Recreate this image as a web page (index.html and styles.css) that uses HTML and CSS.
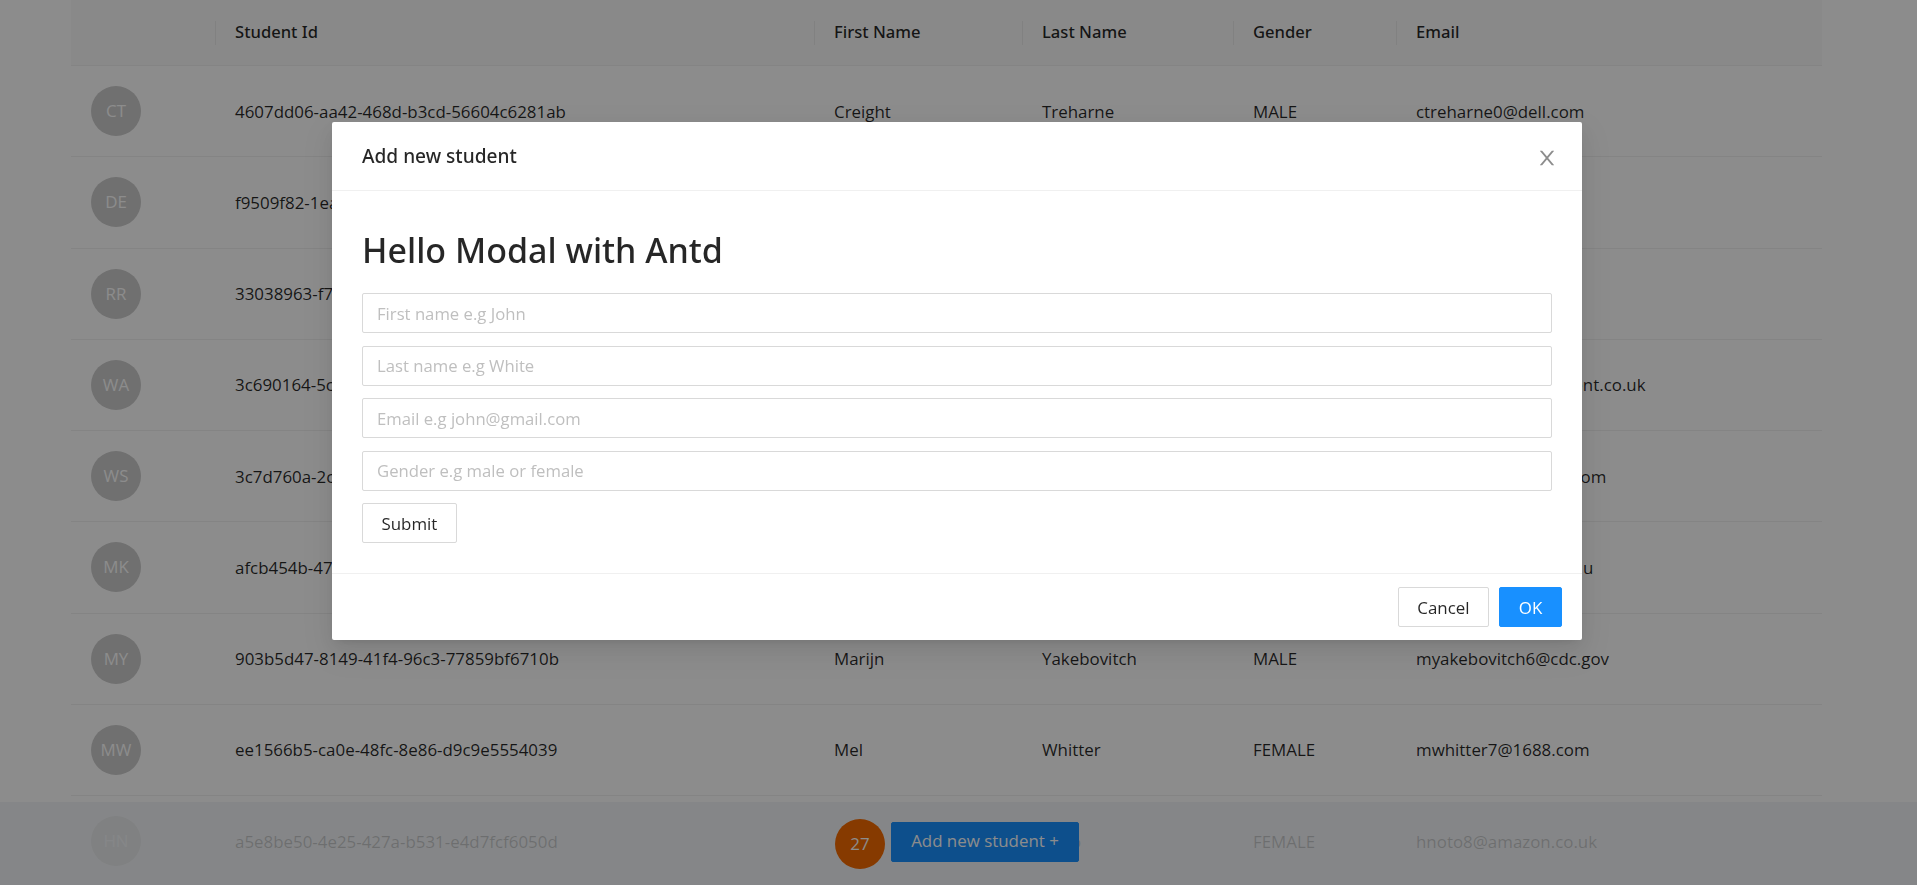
FILE: index.html
```html
<!DOCTYPE html>
<html lang="en">
<head>
    <meta charset="UTF-8">
    <title>Students</title>
    <link rel="stylesheet" href="styles.css">
</head>
<body>
    <!-- Students table -->
    <div class="content">
        <table class="students">
            <colgroup>
                <col class="col-avatar">
                <col class="col-id">
                <col class="col-first">
                <col class="col-last">
                <col class="col-gender">
                <col class="col-email">
            </colgroup>
            <thead>
                <tr>
                    <th></th>
                    <th>Student Id</th>
                    <th>First Name</th>
                    <th>Last Name</th>
                    <th>Gender</th>
                    <th>Email</th>
                </tr>
            </thead>
            <tbody>
                <tr>
                    <td><div class="avatar">CT</div></td>
                    <td>4607dd06-aa42-468d-b3cd-56604c6281ab</td>
                    <td>Creight</td>
                    <td>Treharne</td>
                    <td>MALE</td>
                    <td>ctreharne0@dell.com</td>
                </tr>
                <tr>
                    <td><div class="avatar">DE</div></td>
                    <td>f9509f82-1ea2-4a5c-9d3e-7b1c0e6f42a8</td>
                    <td>Dulcea</td>
                    <td>Eilers</td>
                    <td>FEMALE</td>
                    <td>deilers1@usa.gov</td>
                </tr>
                <tr>
                    <td><div class="avatar">RR</div></td>
                    <td>33038963-f7a1-4b60-8e2d-91c4d7a3e015</td>
                    <td>Rica</td>
                    <td>Rowe</td>
                    <td>FEMALE</td>
                    <td>rrowe2@ibm.com</td>
                </tr>
                <tr>
                    <td><div class="avatar">WA</div></td>
                    <td>3c690164-5cb2-4e7f-a0d6-28f3b9c1d746</td>
                    <td>Wilt</td>
                    <td>Aldous</td>
                    <td>MALE</td>
                    <td>waldou3@independent.co.uk</td>
                </tr>
                <tr>
                    <td><div class="avatar">WS</div></td>
                    <td>3c7d760a-2c94-4d18-b7e5-60a2f8e3c917</td>
                    <td>Wyn</td>
                    <td>Samson</td>
                    <td>MALE</td>
                    <td>wsamson4@google.com</td>
                </tr>
                <tr>
                    <td><div class="avatar">MK</div></td>
                    <td>afcb454b-47d3-4f06-9c1a-b5e7d2083f64</td>
                    <td>Maggi</td>
                    <td>Kells</td>
                    <td>FEMALE</td>
                    <td>mkelly5@stanford.edu</td>
                </tr>
                <tr>
                    <td><div class="avatar">MY</div></td>
                    <td>903b5d47-8149-41f4-96c3-77859bf6710b</td>
                    <td>Marijn</td>
                    <td>Yakebovitch</td>
                    <td>MALE</td>
                    <td>myakebovitch6@cdc.gov</td>
                </tr>
                <tr>
                    <td><div class="avatar">MW</div></td>
                    <td>ee1566b5-ca0e-48fc-8e86-d9c9e5554039</td>
                    <td>Mel</td>
                    <td>Whitter</td>
                    <td>FEMALE</td>
                    <td>mwhitter7@1688.com</td>
                </tr>
                <tr>
                    <td><div class="avatar">HN</div></td>
                    <td>a5e8be50-4e25-427a-b531-e4d7fcf6050d</td>
                    <td></td>
                    <td>Noto</td>
                    <td>FEMALE</td>
                    <td>hnoto8@amazon.co.uk</td>
                </tr>
            </tbody>
        </table>
    </div>

    <!-- Footer with student count -->
    <div class="footer">
        <div class="footer-back"></div>
        <div class="count">27</div>
        <button class="btn btn-primary btn-add">Add new student +</button>
    </div>

    <!-- Add student modal -->
    <div class="overlay">
        <div class="modal">
            <div class="modal-header">
                <div class="modal-title">Add new student</div>
                <svg class="modal-close" viewBox="64 64 896 896" width="20" height="20">
                    <path d="M563.8 512l262.5-312.9c4.4-5.2.7-13.1-6.1-13.1h-79.8c-4.7 0-9.2 2.1-12.3 5.7L511.6 449.8 295.1 191.7c-3-3.6-7.5-5.7-12.3-5.7H203c-6.8 0-10.5 7.9-6.1 13.1L459.4 512 196.9 824.9A7.95 7.95 0 0 0 203 838h79.8c4.7 0 9.2-2.1 12.3-5.7l216.5-258.1 216.5 258.1c3 3.6 7.5 5.7 12.3 5.7h79.8c6.8 0 10.5-7.9 6.1-13.1L563.8 512z"/>
                </svg>
            </div>
            <div class="modal-body">
                <h1>Hello Modal with Antd</h1>
                <form class="student-form">
                    <input type="text" placeholder="First name e.g John">
                    <input type="text" placeholder="Last name e.g White">
                    <input type="text" placeholder="Email e.g john@gmail.com">
                    <input type="text" placeholder="Gender e.g male or female">
                    <button type="button" class="btn btn-submit">Submit</button>
                </form>
            </div>
            <div class="modal-footer">
                <button class="btn">Cancel</button>
                <button class="btn btn-primary btn-ok">OK</button>
            </div>
        </div>
    </div>
</body>
</html>
```

FILE: styles.css
```css
/* Students page */
body {
    margin: 0;
    height: 885px;
    overflow: hidden;
    background-color: #fff;
    font-family: "Open Sans", "Noto Sans", sans-serif;
    font-size: 16.9px;
    color: rgba(0, 0, 0, 0.85);
}

.content {
    padding: 0 95px 0 71px;
}

/* Table */
.students {
    width: 1751px;
    table-layout: fixed;
    border-collapse: collapse;
}
.col-avatar { width: 144px; }
.col-id { width: 599px; }
.col-first { width: 208px; }
.col-last { width: 211px; }
.col-gender { width: 163px; }
.col-email { width: 426px; }

.students th {
    position: relative;
    height: 63px;
    padding: 0 20px 2px;
    background-color: #fafafa;
    border-bottom: 1px solid #f0f0f0;
    text-align: left;
    font-family: "Noto Sans", sans-serif;
    font-size: 16.6px;
    font-weight: 500;
    white-space: nowrap;
}
.students th + th::before {
    content: "";
    position: absolute;
    top: 21px;
    left: 0;
    width: 1px;
    height: 24px;
    background-color: #ececec;
}
.students td {
    height: 90.25px;
    padding: 0 20px;
    border-bottom: 1px solid #f0f0f0;
    white-space: nowrap;
}

.avatar {
    width: 50px;
    height: 50px;
    border-radius: 50%;
    background-color: #ccc;
    color: #fff;
    line-height: 50px;
    text-align: center;
}

/* Footer */
.footer {
    position: fixed;
    left: 0;
    right: 0;
    bottom: 0;
    height: 83px;
    display: flex;
    align-items: center;
    padding-left: 835px;
}
.footer-back {
    position: absolute;
    top: 0;
    left: 0;
    right: 0;
    bottom: 0;
    background-color: #f0f2f5;
    opacity: 0.8;
}
.count {
    position: relative;
    width: 50px;
    height: 50px;
    margin-right: 6px;
    margin-top: 1px;
    border-radius: 50%;
    background-color: #f56a00;
    color: #fff;
    line-height: 50px;
    text-align: center;
}

/* Buttons */
.btn {
    height: 40px;
    padding: 0 18.5px;
    background-color: #fff;
    border: 1px solid #d9d9d9;
    border-radius: 2px;
    font-family: inherit;
    font-size: 16.9px;
    color: rgba(0, 0, 0, 0.85);
}
.btn-primary {
    background-color: #1890ff;
    border-color: #1890ff;
    color: #fff;
}
.btn-add {
    position: relative;
    width: 188px;
    margin-top: -4px;
    padding: 0 0 2px;
}
.btn-ok {
    width: 63px;
    padding: 0;
}

/* Modal */
.overlay {
    position: fixed;
    top: 0;
    left: 0;
    right: 0;
    bottom: 0;
    display: flex;
    justify-content: center;
    align-items: flex-start;
    padding: 122px 3px 0 0;
    background-color: rgba(0, 0, 0, 0.45);
}
.modal {
    width: 1250px;
    background-color: #fff;
    border-radius: 2px;
    box-shadow: 0 4px 8px -5px rgba(0, 0, 0, 0.12), 0 8px 20px 0 rgba(0, 0, 0, 0.08), 0 11px 35px 10px rgba(0, 0, 0, 0.05);
}
.modal-header {
    display: flex;
    justify-content: space-between;
    align-items: center;
    height: 68px;
    padding: 0 25px 0 30px;
    border-bottom: 1px solid #f0f0f0;
}
.modal-title {
    font-family: "Noto Sans", sans-serif;
    font-size: 19.1px;
    font-weight: 500;
}
.modal-close {
    margin-top: 3px;
    fill: rgba(0, 0, 0, 0.45);
}
.modal-body {
    height: 382px;
    box-sizing: border-box;
    padding: 30px;
}
.modal-body h1 {
    height: 59px;
    margin: 0 0 13px;
    font-family: "Noto Sans", sans-serif;
    font-size: 34px;
    line-height: 59px;
    font-weight: 500;
}
.student-form {
    display: flex;
    flex-direction: column;
    align-items: flex-start;
    gap: 12.5px;
}
.student-form input {
    box-sizing: border-box;
    width: 100%;
    height: 40px;
    padding: 0 14px;
    border: 1px solid #d9d9d9;
    border-radius: 2px;
    font-family: inherit;
    font-size: 16.7px;
}
.student-form input::placeholder {
    color: #bfbfbf;
}
.modal-footer {
    display: flex;
    justify-content: flex-end;
    gap: 10px;
    height: 67px;
    box-sizing: border-box;
    padding: 13px 20px 0 0;
    border-top: 1px solid #f0f0f0;
}
```
